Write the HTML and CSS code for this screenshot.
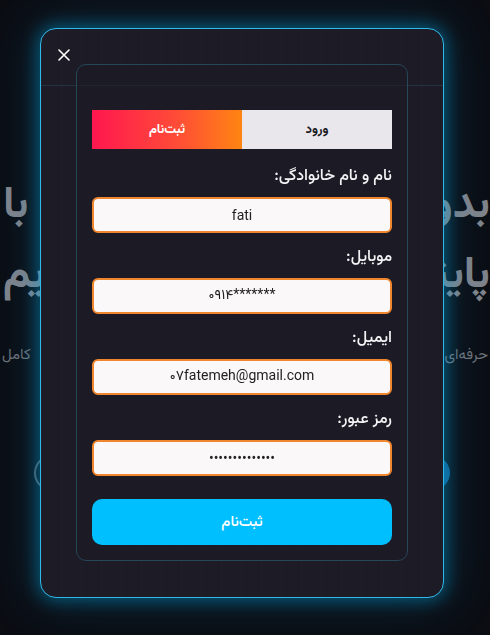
FILE: index.html
```html
<!DOCTYPE html>
<html lang="fa" dir="rtl">
<head>
    <meta charset="UTF-8">
    <meta name="viewport" content="width=device-width, initial-scale=1.0">
    <title>ثبت‌نام</title>
    <link rel="stylesheet" href="styles.css">
</head>
<body>
    <!-- صفحه اصلی پشت مودال -->
    <section class="hero">
        <h1 class="hero-title">
            <span>بدون محدودیت یاد بگیر با</span>
            <span>پایتون را حرفه‌ای بیاموزیم</span>
        </h1>
        <p class="hero-text">حرفه‌ای‌ترین دوره‌های آموزشی به صورت کامل</p>
        <div class="hero-actions">
            <span class="hero-btn"></span>
            <span class="hero-circle"></span>
        </div>
    </section>

    <!-- مودال ورود / ثبت‌نام -->
    <div class="overlay">
        <div class="modal">
            <button class="close-btn" type="button" aria-label="بستن">
                <svg width="12" height="12" viewBox="0 0 12 12">
                    <path d="M1 1L11 11M11 1L1 11" stroke="#fff" stroke-width="1.6" stroke-linecap="round"/>
                </svg>
            </button>
            <div class="auth-card">
                <div class="tabs">
                    <button type="button" class="tab">ورود</button>
                    <button type="button" class="tab tab-active">ثبت‌نام</button>
                </div>
                <form class="auth-form">
                    <div class="field">
                        <label for="fullname">نام و نام خانوادگی:</label>
                        <input type="text" id="fullname" value="fati">
                    </div>
                    <div class="field">
                        <label for="mobile">موبایل:</label>
                        <input type="text" id="mobile" value="۰۹۱۴*******">
                    </div>
                    <div class="field">
                        <label for="email">ایمیل:</label>
                        <input type="text" id="email" value="۰۷fatemeh@gmail.com">
                    </div>
                    <div class="field">
                        <label for="password">رمز عبور:</label>
                        <input type="password" id="password" value="12345678901234">
                    </div>
                    <button type="submit" class="submit-btn">ثبت‌نام</button>
                </form>
            </div>
        </div>
    </div>
</body>
</html>
```

FILE: styles.css
```css
* {
    box-sizing: border-box;
    margin: 0;
    padding: 0;
}

body {
    background-color: #0b0d13;
    font-family: 'Vazirmatn', 'Noto Sans Arabic', 'DejaVu Sans', sans-serif;
    color: #fff;
    height: 635px;
    overflow: hidden;
}

/* صفحه پشت مودال */
.hero {
    padding-top: 172px;
    overflow: hidden;
}

.hero-title {
    display: flex;
    flex-direction: column;
    padding: 0 0 0 3px;
    font-size: 44px;
    font-weight: bold;
    line-height: 70px;
    color: #80838a;
}

.hero-title span,
.hero-text {
    display: block;
    text-align: justify;
    text-align-last: justify;
}

.hero-text {
    margin-top: 32px;
    padding: 0 2px;
    font-size: 15px;
    color: #6f727a;
}

.hero-actions {
    display: flex;
    justify-content: space-between;
    align-items: center;
    margin-top: 88px;
    padding: 0 40px 0 34px;
}

.hero-btn {
    width: 120px;
    height: 34px;
    border-radius: 17px;
    background-color: #145a8a;
}

.hero-circle {
    width: 36px;
    height: 36px;
    border-radius: 50%;
    border: 2px solid #4f555e;
}

/* مودال */
.overlay {
    position: fixed;
    inset: 0;
    display: flex;
    align-items: flex-start;
    justify-content: flex-start;
    padding-top: 28px;
    direction: ltr;
}

.modal {
    position: relative;
    width: 404px;
    margin-left: 40px;
    padding: 35px 35px 36px;
    border: 1px solid #2fb9ea;
    border-radius: 16px;
    background-color: #1d1b25;
    background-image:
        linear-gradient(to bottom, transparent 56px, rgba(70, 170, 210, 0.16) 56px, rgba(70, 170, 210, 0.16) 57px, transparent 57px),
        linear-gradient(to right, rgba(255, 255, 255, 0.012) 1px, transparent 1px);
    background-size: 100% 100%, 20px 20px;
    box-shadow: 0 0 18px 2px rgba(0, 180, 240, 0.45), 0 0 50px 8px rgba(0, 140, 200, 0.18);
    direction: rtl;
}

.close-btn {
    position: absolute;
    top: 19px;
    left: 16px;
    width: 14px;
    height: 14px;
    display: flex;
    align-items: center;
    justify-content: center;
    background: none;
    border: none;
    cursor: pointer;
}

.auth-card {
    padding: 45px 15px 15px;
    border: 1px solid #26465a;
    border-radius: 10px;
    background-color: rgba(29, 27, 37, 0.6);
}

/* تب‌ها */
.tabs {
    display: flex;
    height: 39px;
}

.tab {
    flex: 1;
    border: none;
    font-family: inherit;
    font-size: 13px;
    font-weight: bold;
    background-color: #e9e7eb;
    color: #1a1a1f;
    cursor: pointer;
}

.tab-active {
    background: linear-gradient(to right, #ff174f, #ff4a38 55%, #ff8512);
    color: #fff;
}

/* فرم */
.auth-form {
    display: flex;
    flex-direction: column;
    gap: 12px;
    margin-top: 15px;
}

.field label {
    display: block;
    line-height: 26px;
    margin-bottom: 7px;
    font-size: 16px;
    font-weight: 500;
    color: #f3f3f5;
}

.field input {
    display: block;
    width: 100%;
    height: 36px;
    border: 2px solid #f0872f;
    border-radius: 6px;
    background-color: #fbf8fa;
    font-family: 'Roboto', 'Vazirmatn', 'DejaVu Sans', sans-serif;
    font-size: 14px;
    color: #222;
    text-align: center;
    direction: ltr;
    outline: none;
}

.submit-btn {
    margin-top: 11px;
    height: 46px;
    border: none;
    border-radius: 10px;
    background-color: #00bfff;
    color: #fff;
    font-family: inherit;
    font-size: 15px;
    font-weight: 500;
    cursor: pointer;
}
```
